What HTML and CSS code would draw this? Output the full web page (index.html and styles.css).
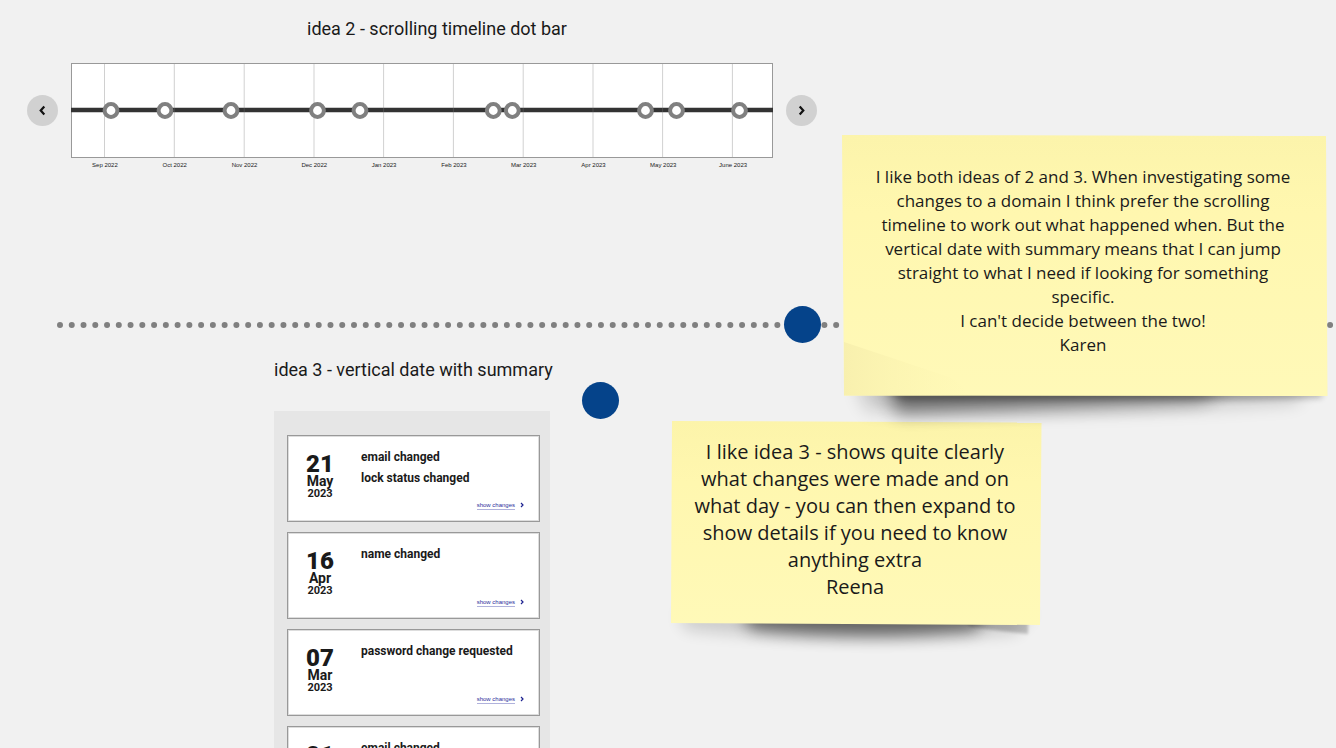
FILE: index.html
```html
<!DOCTYPE html>
<html lang="en">
<head>
<meta charset="utf-8">
<title>Timeline ideas board</title>
<link rel="stylesheet" href="styles.css">
</head>
<body>
<main class="board">
  <h2 class="title title-two">idea 2 - scrolling timeline dot bar</h2>

  <section class="timeline" aria-label="Scrolling timeline">
    <button class="arrow" type="button" aria-label="Earlier">
      <svg width="9" height="11" viewBox="0 0 9 11"><path d="M6.3 1.5 2.700 5.5l3.600 4"/></svg>
    </button>
    <div class="track">
      <svg class="chart" viewBox="0 0 702 95" role="img" aria-label="Changes from September 2022 to June 2023">
        <rect class="frame" x="0.5" y="0.5" width="701" height="94"/>
        <path class="axis" d="M0 47H702"/>
        <path class="grid" d="M33.5 1V94M103.3 1V94M173.2 1V94M243 1V94M312.6 1V94M382.4 1V94M452.2 1V94M522 1V94M591.6 1V94M661.4 1V94"/>
        <g class="stops">
          <circle cx="40" cy="47.5" r="6.4"/><circle cx="94" cy="47.5" r="6.4"/><circle cx="160" cy="47.5" r="6.4"/><circle cx="246.5" cy="47.5" r="6.4"/><circle cx="289" cy="47.5" r="6.4"/><circle cx="422.3" cy="47.5" r="6.4"/><circle cx="441.3" cy="47.5" r="6.4"/><circle cx="574.5" cy="47.5" r="6.4"/><circle cx="605.5" cy="47.5" r="6.4"/><circle cx="668.5" cy="47.5" r="6.4"/>
        </g>
      </svg>
      <ol class="months">
        <li>Sep 2022</li><li>Oct 2022</li><li>Nov 2022</li><li>Dec 2022</li><li>Jan 2023</li><li>Feb 2023</li><li>Mar 2023</li><li>Apr 2023</li><li>May 2023</li><li>June 2023</li>
      </ol>
    </div>
    <button class="arrow" type="button" aria-label="Later">
      <svg width="9" height="11" viewBox="0 0 9 11"><path d="m2.700 1.5 3.600 4-3.600 4"/></svg>
    </button>
  </section>

  <svg class="divider" width="1280" height="6" viewBox="0 0 1280 6" aria-hidden="true"><path d="M3 3H1280"/></svg>
  <span class="vote vote-a"></span>
  <span class="vote vote-b"></span>

  <h2 class="title title-three">idea 3 - vertical date with summary</h2>

  <section class="panel" aria-label="Changes by date">
    <article class="card">
      <time class="date"><b class="day">21</b><span class="month">May</span><span class="year">2023</span></time>
      <ul class="changes"><li>email changed</li><li>lock status changed</li></ul>
      <a class="more" href="#"><span>show changes</span><svg width="4" height="6" viewBox="0 0 4 6"><path d="m1 1 2 2-2 2"/></svg></a>
    </article>
    <article class="card">
      <time class="date"><b class="day">16</b><span class="month">Apr</span><span class="year">2023</span></time>
      <ul class="changes"><li>name changed</li></ul>
      <a class="more" href="#"><span>show changes</span><svg width="4" height="6" viewBox="0 0 4 6"><path d="m1 1 2 2-2 2"/></svg></a>
    </article>
    <article class="card">
      <time class="date"><b class="day">07</b><span class="month">Mar</span><span class="year">2023</span></time>
      <ul class="changes"><li>password change requested</li></ul>
      <a class="more" href="#"><span>show changes</span><svg width="4" height="6" viewBox="0 0 4 6"><path d="m1 1 2 2-2 2"/></svg></a>
    </article>
    <article class="card">
      <time class="date"><b class="day">21</b></time>
      <ul class="changes"><li>email changed</li></ul>
    </article>
  </section>

  <article class="note note-reena">
    <svg class="paper" viewBox="0 0 371 250" aria-hidden="true">
      <defs>
        <filter id="softSmall" x="-20%" y="-100%" width="140%" height="300%"><feGaussianBlur stdDeviation="8"/></filter>
        <filter id="edgeSmall" x="-20%" y="-100%" width="140%" height="300%"><feGaussianBlur stdDeviation="1.5"/></filter>
        <linearGradient id="sheetSmall" x1="0" y1="0" x2="0" y2="1"><stop offset="0" stop-color="#fcf4aa"/><stop offset=".3" stop-color="#fff7af"/><stop offset="1" stop-color="#fff9b8"/></linearGradient>
      </defs>
      <path d="M8 190H362L345 212Q190 226 14 208Z" fill="#000" opacity=".16" filter="url(#softSmall)"/>
      <path d="M65 180H320L305 209Q190 220 80 208Z" fill="#000" opacity=".52" filter="url(#softSmall)"/>
      <path d="M290 198H357V213L330 210 300 206Z" fill="#000" opacity=".2" filter="url(#edgeSmall)"/>
      <path d="M1 0 370.5 1.5 369 204 0 202Z" fill="url(#sheetSmall)"/>
    </svg>
    <p>I like idea 3 - shows quite clearly<br>what changes were made and on<br>what day - you can then expand to<br>show details if you need to know<br>anything extra<br>Reena</p>
  </article>

  <article class="note note-karen">
    <svg class="paper" viewBox="0 0 486 310" aria-hidden="true">
      <defs>
        <filter id="softLarge" x="-20%" y="-100%" width="140%" height="300%"><feGaussianBlur stdDeviation="9"/></filter>
        <filter id="edgeLarge" x="-20%" y="-100%" width="140%" height="300%"><feGaussianBlur stdDeviation="3"/></filter>
        <linearGradient id="sheetLarge" x1="0" y1="0" x2="0" y2="1"><stop offset="0" stop-color="#fcf4ab"/><stop offset=".3" stop-color="#fff7af"/><stop offset="1" stop-color="#fff9b8"/></linearGradient>
        <linearGradient id="fold" x1="0" y1="0" x2="1" y2="0"><stop offset="0" stop-color="#f8f0ae"/><stop offset="1" stop-color="#fdf6b2" stop-opacity="0"/></linearGradient>
      </defs>
      <path d="M12 240H470L455 268Q240 284 24 276Z" fill="#000" opacity=".17" filter="url(#softLarge)"/>
      <path d="M40 240H400L360 266Q220 272 55 280Z" fill="#000" opacity=".46" filter="url(#softLarge)"/>
      <path d="M34 250H480V264L400 266 60 266Z" fill="#000" opacity=".24" filter="url(#edgeLarge)"/>
      <path d="M0 1 484 2 485.5 262 2 261.5Z" fill="url(#sheetLarge)"/>
      <path d="M2 208 110 244 130 262 2 261.5Z" fill="url(#fold)"/>
    </svg>
    <p>I like both ideas of 2 and 3. When investigating some<br>changes to a domain I think prefer the scrolling<br>timeline to work out what happened when. But the<br>vertical date with summary means that I can jump<br>straight to what I need if looking for something<br>specific.<br>I can't decide between the two!<br>Karen</p>
  </article>
</main>
</body>
</html>
```
FILE: styles.css
```css
* { box-sizing: border-box; }

body {
  margin: 0;
  background: #f1f1f1;
  color: #1a1a1a;
  font-family: Roboto, "Liberation Sans", sans-serif;
}

ul, ol, p, h2 { margin: 0; padding: 0; list-style: none; }

.board {
  position: relative;
  height: 100vh;
  overflow: hidden;
}

/* Items pinned on the board */
.title, .timeline, .divider, .vote, .panel, .note { position: absolute; }

.title { font-size: 18px; line-height: 24px; font-weight: 400; white-space: nowrap; }
.title-two { left: 307px; top: 17px; }
.title-three { left: 274px; top: 358px; }

.timeline {
  left: 27px;
  top: 63px;
  display: flex;
  gap: 13px;
}
.arrow {
  display: grid;
  place-items: center;
  width: 31px;
  height: 31px;
  margin-top: 32px;
  padding: 0;
  border: 0;
  border-radius: 50%;
  background: #d1d1d1;
}
.arrow path { fill: none; stroke: #111; stroke-width: 2.2; }
.track { width: 702px; }
.chart { display: block; width: 100%; }
.frame { fill: #fff; stroke: #999; }
.axis { stroke: #333; stroke-width: 4.5; }
.grid { fill: none; stroke: #777; stroke-opacity: .35; }
.stops circle { fill: #fff; stroke: #808080; stroke-width: 4; }
.months {
  display: grid;
  grid-template-columns: repeat(10, 1fr);
  width: 698px;
  margin: 3px 0 0 -1px;
  font: 6px/8px "Liberation Sans", Arial, sans-serif;
  text-align: center;
}

.divider { left: 57px; top: 322px; }
.divider path {
  fill: none;
  stroke: #808080;
  stroke-width: 6;
  stroke-linecap: round;
  stroke-dasharray: 0 11.76;
}
.vote { width: 37px; height: 37px; border-radius: 50%; background: #05438a; }
.vote-a { left: 784px; top: 306px; }
.vote-b { left: 582px; top: 382px; }

.panel {
  left: 274px;
  top: 411px;
  display: grid;
  gap: 10px;
  width: 276px;
  padding: 24px 10px 24px 13px;
  background: #e6e6e6;
}
.card {
  display: grid;
  grid-template-columns: 28px 1fr;
  grid-template-rows: 1fr auto;
  column-gap: 27px;
  min-height: 87px;
  padding: 17px 15px 11px 18px;
  border: 1px solid #999;
  outline: 1px solid #ddd;
  outline-offset: -2px;
  background: #fff;
  font-weight: 700;
}
.date { display: flex; flex-direction: column; align-items: center; grid-row: span 2; }
.day { font-size: 24px; line-height: 22px; }
.month { font-size: 14px; line-height: 12px; }
.year { font-size: 11px; line-height: 13px; }
.changes { font-size: 12px; line-height: 21px; margin-top: -6px; }
.more {
  display: flex;
  gap: 5px;
  justify-content: flex-end;
  color: #2b2f9c;
  font: 6px/8px "Liberation Sans", Arial, sans-serif;
  text-decoration: none;
}
.more span { border-bottom: 1px solid #b0b2dc; }
.more svg { margin-top: 1px; }
.more path { fill: none; stroke: #1d2290; stroke-width: 1.2; }

.note { text-align: center; font-family: "Open Sans", "Noto Sans", sans-serif; }
.note p { position: relative; white-space: nowrap; }
.paper { position: absolute; left: 0; top: 0; width: 100%; overflow: visible; }
.note-karen { left: 842px; top: 134px; width: 486px; padding: 31px 4px 0 0; font-size: 17px; line-height: 24px; }
.note-reena { left: 671px; top: 421px; width: 371px; padding: 17px 3px 0 0; font-size: 20px; line-height: 27px; }
```
